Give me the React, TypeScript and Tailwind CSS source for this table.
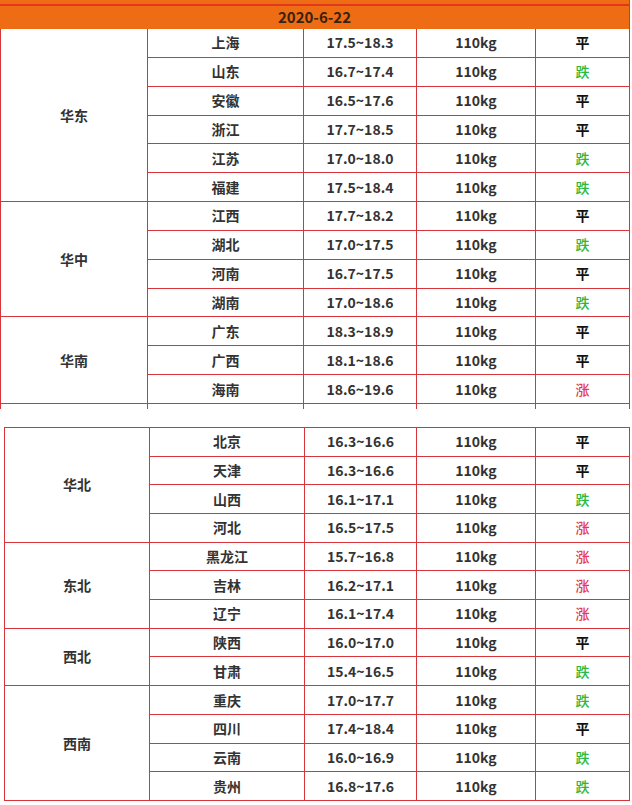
type Row = { city: string; price: string; weight: string; trend: '平' | '跌' | '涨' };
type Region = { name: string; rows: Row[] };

const tableOne: Region[] = [
    {
        name: '华东',
        rows: [
            { city: '上海', price: '17.5~18.3', weight: '110kg', trend: '平' },
            { city: '山东', price: '16.7~17.4', weight: '110kg', trend: '跌' },
            { city: '安徽', price: '16.5~17.6', weight: '110kg', trend: '平' },
            { city: '浙江', price: '17.7~18.5', weight: '110kg', trend: '平' },
            { city: '江苏', price: '17.0~18.0', weight: '110kg', trend: '跌' },
            { city: '福建', price: '17.5~18.4', weight: '110kg', trend: '跌' },
        ],
    },
    {
        name: '华中',
        rows: [
            { city: '江西', price: '17.7~18.2', weight: '110kg', trend: '平' },
            { city: '湖北', price: '17.0~17.5', weight: '110kg', trend: '跌' },
            { city: '河南', price: '16.7~17.5', weight: '110kg', trend: '平' },
            { city: '湖南', price: '17.0~18.6', weight: '110kg', trend: '跌' },
        ],
    },
    {
        name: '华南',
        rows: [
            { city: '广东', price: '18.3~18.9', weight: '110kg', trend: '平' },
            { city: '广西', price: '18.1~18.6', weight: '110kg', trend: '平' },
            { city: '海南', price: '18.6~19.6', weight: '110kg', trend: '涨' },
        ],
    },
];

const tableTwo: Region[] = [
    {
        name: '华北',
        rows: [
            { city: '北京', price: '16.3~16.6', weight: '110kg', trend: '平' },
            { city: '天津', price: '16.3~16.6', weight: '110kg', trend: '平' },
            { city: '山西', price: '16.1~17.1', weight: '110kg', trend: '跌' },
            { city: '河北', price: '16.5~17.5', weight: '110kg', trend: '涨' },
        ],
    },
    {
        name: '东北',
        rows: [
            { city: '黑龙江', price: '15.7~16.8', weight: '110kg', trend: '涨' },
            { city: '吉林', price: '16.2~17.1', weight: '110kg', trend: '涨' },
            { city: '辽宁', price: '16.1~17.4', weight: '110kg', trend: '涨' },
        ],
    },
    {
        name: '西北',
        rows: [
            { city: '陕西', price: '16.0~17.0', weight: '110kg', trend: '平' },
            { city: '甘肃', price: '15.4~16.5', weight: '110kg', trend: '跌' },
        ],
    },
    {
        name: '西南',
        rows: [
            { city: '重庆', price: '17.0~17.7', weight: '110kg', trend: '跌' },
            { city: '四川', price: '17.4~18.4', weight: '110kg', trend: '平' },
            { city: '云南', price: '16.0~16.9', weight: '110kg', trend: '跌' },
            { city: '贵州', price: '16.8~17.6', weight: '110kg', trend: '跌' },
        ],
    },
];

const trendColor = {
    平: 'text-[#111111]',
    跌: 'text-[#2db83a] font-medium',
    涨: 'text-[#e5394f] font-medium',
};

const cell = 'flex items-center justify-center border-r border-b border-[#d8343c]';

function PriceTable({ regions, cols, rowH }: { regions: Region[]; cols: string; rowH: string }) {
    return (
        <div className={`grid ${cols} border-l border-[#d8343c]`}>
            {regions.map((region) =>
                region.rows.map((row, i) => (
                    <div key={row.city} className="contents">
                        {i === 0 && (
                            <div
                                className={cell}
                                style={{ gridRow: `span ${region.rows.length} / span ${region.rows.length}` }}
                            >
                                {region.name}
                            </div>
                        )}
                        <div className={`${cell} ${rowH}`}>{row.city}</div>
                        <div className={`${cell} ${rowH}`}>{row.price}</div>
                        <div className={`${cell} ${rowH}`}>{row.weight}</div>
                        <div className={`${cell} ${rowH} ${trendColor[row.trend]}`}>{row.trend}</div>
                    </div>
                ))
            )}
        </div>
    );
}

export default function App() {
    const colsOne = 'grid-cols-[147px_156px_113px_119px_94px]';
    const colsTwo = 'grid-cols-[145px_155px_112px_119px_94px]';

    return (
        <div
            className="w-[632px] h-[805px] bg-white text-[14px] font-bold text-[#333333]"
            style={{ fontFamily: '"Microsoft YaHei", "Noto Sans CJK SC", "Noto Sans", sans-serif' }}
        >
            <div className="w-[630px] bg-[#ee6c14] border-r border-[#d8343c]">
                <div className="h-[4px]" />
                <div className="h-[2px] bg-[#e4361c]" />
                <div className="h-[23px] flex items-center justify-center text-[#3a2210] text-[15px]">
                    2020-6-22
                </div>
            </div>

            <div className="w-[630px]">
                <PriceTable regions={tableOne} cols={colsOne} rowH="h-[28.85px]" />
                <div className={`grid ${colsOne} h-[5px] border-l border-[#d8343c]`}>
                    <div className="border-r border-[#d8343c]" />
                    <div className="border-r border-[#d8343c]" />
                    <div className="border-r border-[#d8343c]" />
                    <div className="border-r border-[#d8343c]" />
                    <div className="border-r border-[#d8343c]" />
                </div>
            </div>

            <div className="mt-[18px] ml-[4px] w-[626px] border-t border-[#d8343c]">
                <PriceTable regions={tableTwo} cols={colsTwo} rowH="h-[28.7px]" />
            </div>
        </div>
    );
}
